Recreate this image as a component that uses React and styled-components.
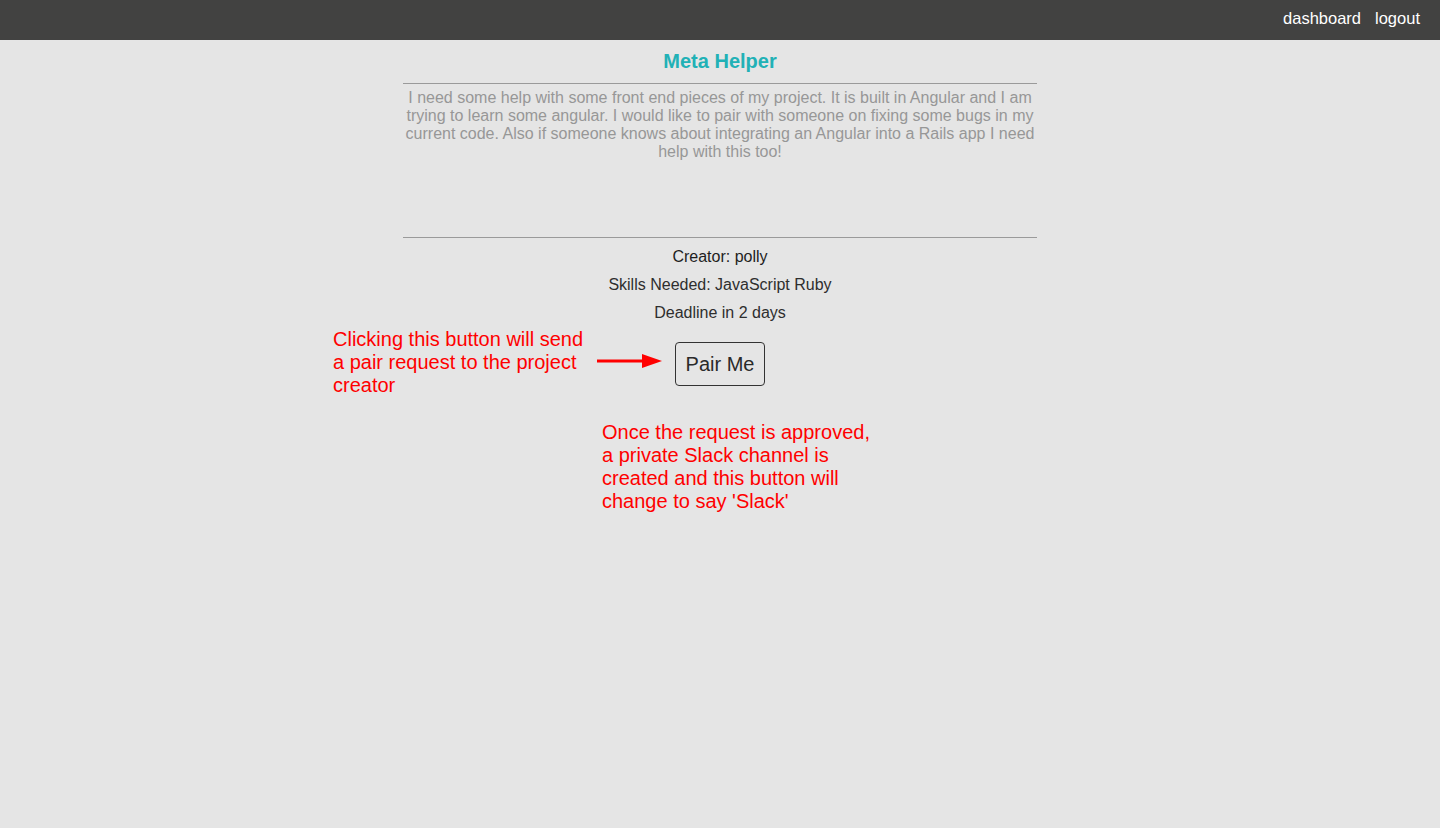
import React from 'react';
import styled, { createGlobalStyle } from 'styled-components';

const GlobalStyle = createGlobalStyle`
    html, body {
        margin: 0;
        padding: 0;
        background: #e5e5e5;
        font-family: "Liberation Sans", Arial, Helvetica, sans-serif;
    }
`;

const Page = styled.div`
    min-height: 828px;
    background: #e5e5e5;
    position: relative;
`;

const NavBar = styled.nav`
    height: 40px;
    box-sizing: border-box;
    padding: 0 20px 4px 0;
    background: #424241;
    display: flex;
    justify-content: flex-end;
    align-items: center;
    gap: 14px;
`;

const NavLink = styled.a`
    color: #ffffff;
    font-size: 16.5px;
    text-decoration: none;
    cursor: pointer;
`;

const Project = styled.section`
    width: 634px;
    margin: 0 auto;
    display: flex;
    flex-direction: column;
    align-items: center;
`;

const Title = styled.h1`
    margin: 0;
    padding-top: 10px;
    height: 33px;
    line-height: 22px;
    font-size: 20px;
    font-weight: bold;
    color: #21b1b6;
`;

const Divider = styled.hr`
    width: 100%;
    margin: 0;
    border: 0;
    border-top: 1px solid #9a9a9a;
`;

const Description = styled.p`
    margin: 0;
    padding-top: 5px;
    height: 148px;
    width: 100%;
    text-align: center;
    font-size: 16px;
    line-height: 18px;
    color: #979797;
`;

const Detail = styled.p`
    margin: 0;
    font-size: 16px;
    line-height: 28px;
    color: ${p => (p.$strong ? '#1e1e1e' : '#2e2e2e')};
    font-weight: ${p => (p.$strong ? 500 : 'normal')};
`;

const Details = styled.div`
    padding-top: 5px;
    display: flex;
    flex-direction: column;
    align-items: center;
`;

const PairButton = styled.button`
    margin-top: 15px;
    width: 90px;
    height: 44px;
    background: transparent;
    border: 1px solid #333;
    border-radius: 4px;
    font-family: "Liberation Sans", Arial, sans-serif;
    font-size: 20px;
    color: #2a2a2a;
    cursor: pointer;
`;

const Note = styled.div`
    position: absolute;
    left: ${p => p.$left}px;
    top: ${p => p.$top}px;
    color: #ff0000;
    font-size: 20px;
    line-height: 23px;
`;

const Arrow = styled.svg`
    position: absolute;
    left: 596px;
    top: 352px;
`;

export default function App() {
    return (
        <Page>
            <GlobalStyle />
            <NavBar>
                <NavLink>dashboard</NavLink>
                <NavLink>logout</NavLink>
            </NavBar>
            <Project>
                <Title>Meta Helper</Title>
                <Divider />
                <Description>
                    I need some help with some front end pieces of my project. It is built in Angular and I am
                    trying to learn some angular. I would like to pair with someone on fixing some bugs in my
                    current code. Also if someone knows about integrating an Angular into a Rails app I need
                    help with this too!
                </Description>
                <Divider />
                <Details>
                    <Detail $strong>Creator: polly</Detail>
                    <Detail>Skills Needed: JavaScript Ruby</Detail>
                    <Detail>Deadline in 2 days</Detail>
                </Details>
                <PairButton>Pair Me</PairButton>
            </Project>

            {/* annotations drawn over the page */}
            <Note $left={333} $top={328}>
                Clicking this button will send<br />
                a pair request to the project<br />
                creator
            </Note>
            <Arrow width="68" height="18" viewBox="0 0 68 18">
                <line x1="1" y1="9" x2="50" y2="9" stroke="#ff0000" strokeWidth="3" />
                <polygon points="46,2 66,9 46,16" fill="#ff0000" />
            </Arrow>
            <Note $left={602} $top={421}>
                Once the request is approved,<br />
                a private Slack channel is<br />
                created and this button will<br />
                change to say 'Slack'
            </Note>
        </Page>
    );
}
